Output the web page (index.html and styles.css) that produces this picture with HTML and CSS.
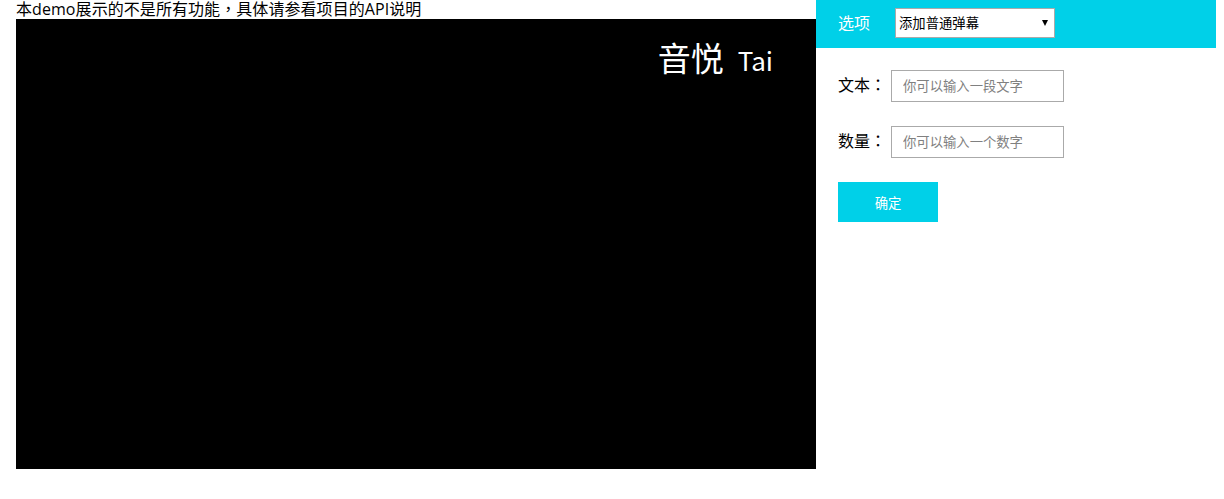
FILE: index.html
```html
<!DOCTYPE html>
<html lang="en">
<head>
  <meta charset="UTF-8">
  <title>弹幕 demo</title>
  <link rel="stylesheet" href="styles.css">
</head>
<body>
  <div class="player-col">
    <div class="tip">本demo展示的不是所有功能，具体请参看项目的API说明</div>
    <div class="player">
      <div class="logo">
        <span class="logo-cn">音悦</span>
        <span class="logo-en">Tai</span>
      </div>
    </div>
  </div>

  <div class="panel">
    <div class="panel-head">
      <span class="panel-title">选项</span>
      <div class="select-wrap">
        <select class="type-select">
          <option>添加普通弹幕</option>
        </select>
      </div>
    </div>
    <form class="panel-form">
      <div class="row">
        <label for="text">文本：</label>
        <input type="text" id="text" placeholder="你可以输入一段文字">
      </div>
      <div class="row">
        <label for="count">数量：</label>
        <input type="text" id="count" placeholder="你可以输入一个数字">
      </div>
      <button type="button" class="btn-ok">确定</button>
    </form>
  </div>
</body>
</html>
```

FILE: styles.css
```css
/* General Styles */
body {
  font-family: "Noto Sans CJK SC", sans-serif;
  background-color: #fff;
  color: #000;
  margin: 0;
  padding: 0 8px 0 16px;
  display: flex;
  align-items: flex-start;
}

/* Player */
.player-col {
  width: 800px;
  flex-shrink: 0;
}

.tip {
  font-family: "Open Sans", "Noto Sans CJK TC", sans-serif;
  font-size: 16px;
  letter-spacing: 0.07px;
  line-height: 19px;
  height: 19px;
  white-space: nowrap;
}

.player {
  background-color: #000;
  height: 450px;
  display: flex;
  justify-content: flex-end;
  align-items: flex-start;
  padding: 16px 43px 0 0;
  box-sizing: border-box;
}

.logo {
  color: #fff;
  display: flex;
  align-items: baseline;
  gap: 14px;
  line-height: 44px;
  white-space: nowrap;
}

.logo-cn {
  font-size: 33px;
}

.logo-en {
  font-size: 26px;
}

/* Options panel */
.panel {
  width: 400px;
  flex-shrink: 0;
}

.panel-head {
  background-color: #00d0e8;
  height: 48px;
  padding-left: 22px;
  display: flex;
  align-items: center;
  gap: 25px;
}

.panel-title {
  color: #fff;
  font-size: 16px;
  line-height: 22px;
  position: relative;
  top: -2px;
}

.select-wrap {
  position: relative;
  width: 160px;
  height: 30px;
  margin-top: -3px;
}

.select-wrap::after {
  content: "";
  position: absolute;
  top: 12px;
  right: 7px;
  border-left: 3.5px solid transparent;
  border-right: 3.5px solid transparent;
  border-top: 6px solid #000;
}

.type-select {
  appearance: none;
  width: 100%;
  height: 100%;
  font-family: inherit;
  font-size: 13.33px;
  color: #000;
  background-color: #fff;
  border: 1px solid #aaa;
  border-radius: 0;
  padding: 0 0 0 3px;
}

.panel-form {
  padding: 22px 0 0 22px;
  display: flex;
  flex-direction: column;
  align-items: flex-start;
}

.row {
  display: flex;
  align-items: center;
  margin-bottom: 24px;
}

.row label {
  width: 53px;
  font-family: "Noto Sans CJK TC", sans-serif;
  font-size: 16px;
  line-height: 22px;
  position: relative;
  top: -2px;
}

.row input {
  width: 173px;
  height: 32px;
  box-sizing: border-box;
  border: 1px solid #aaa;
  padding: 0 11px 2px;
  font-family: inherit;
  font-size: 13.33px;
  outline: none;
}

.row input::placeholder {
  color: #808080;
  opacity: 1;
}

.btn-ok {
  width: 100px;
  height: 40px;
  background-color: #00d0e8;
  color: #fff;
  border: none;
  font-family: inherit;
  font-size: 13.33px;
  cursor: pointer;
}
```
